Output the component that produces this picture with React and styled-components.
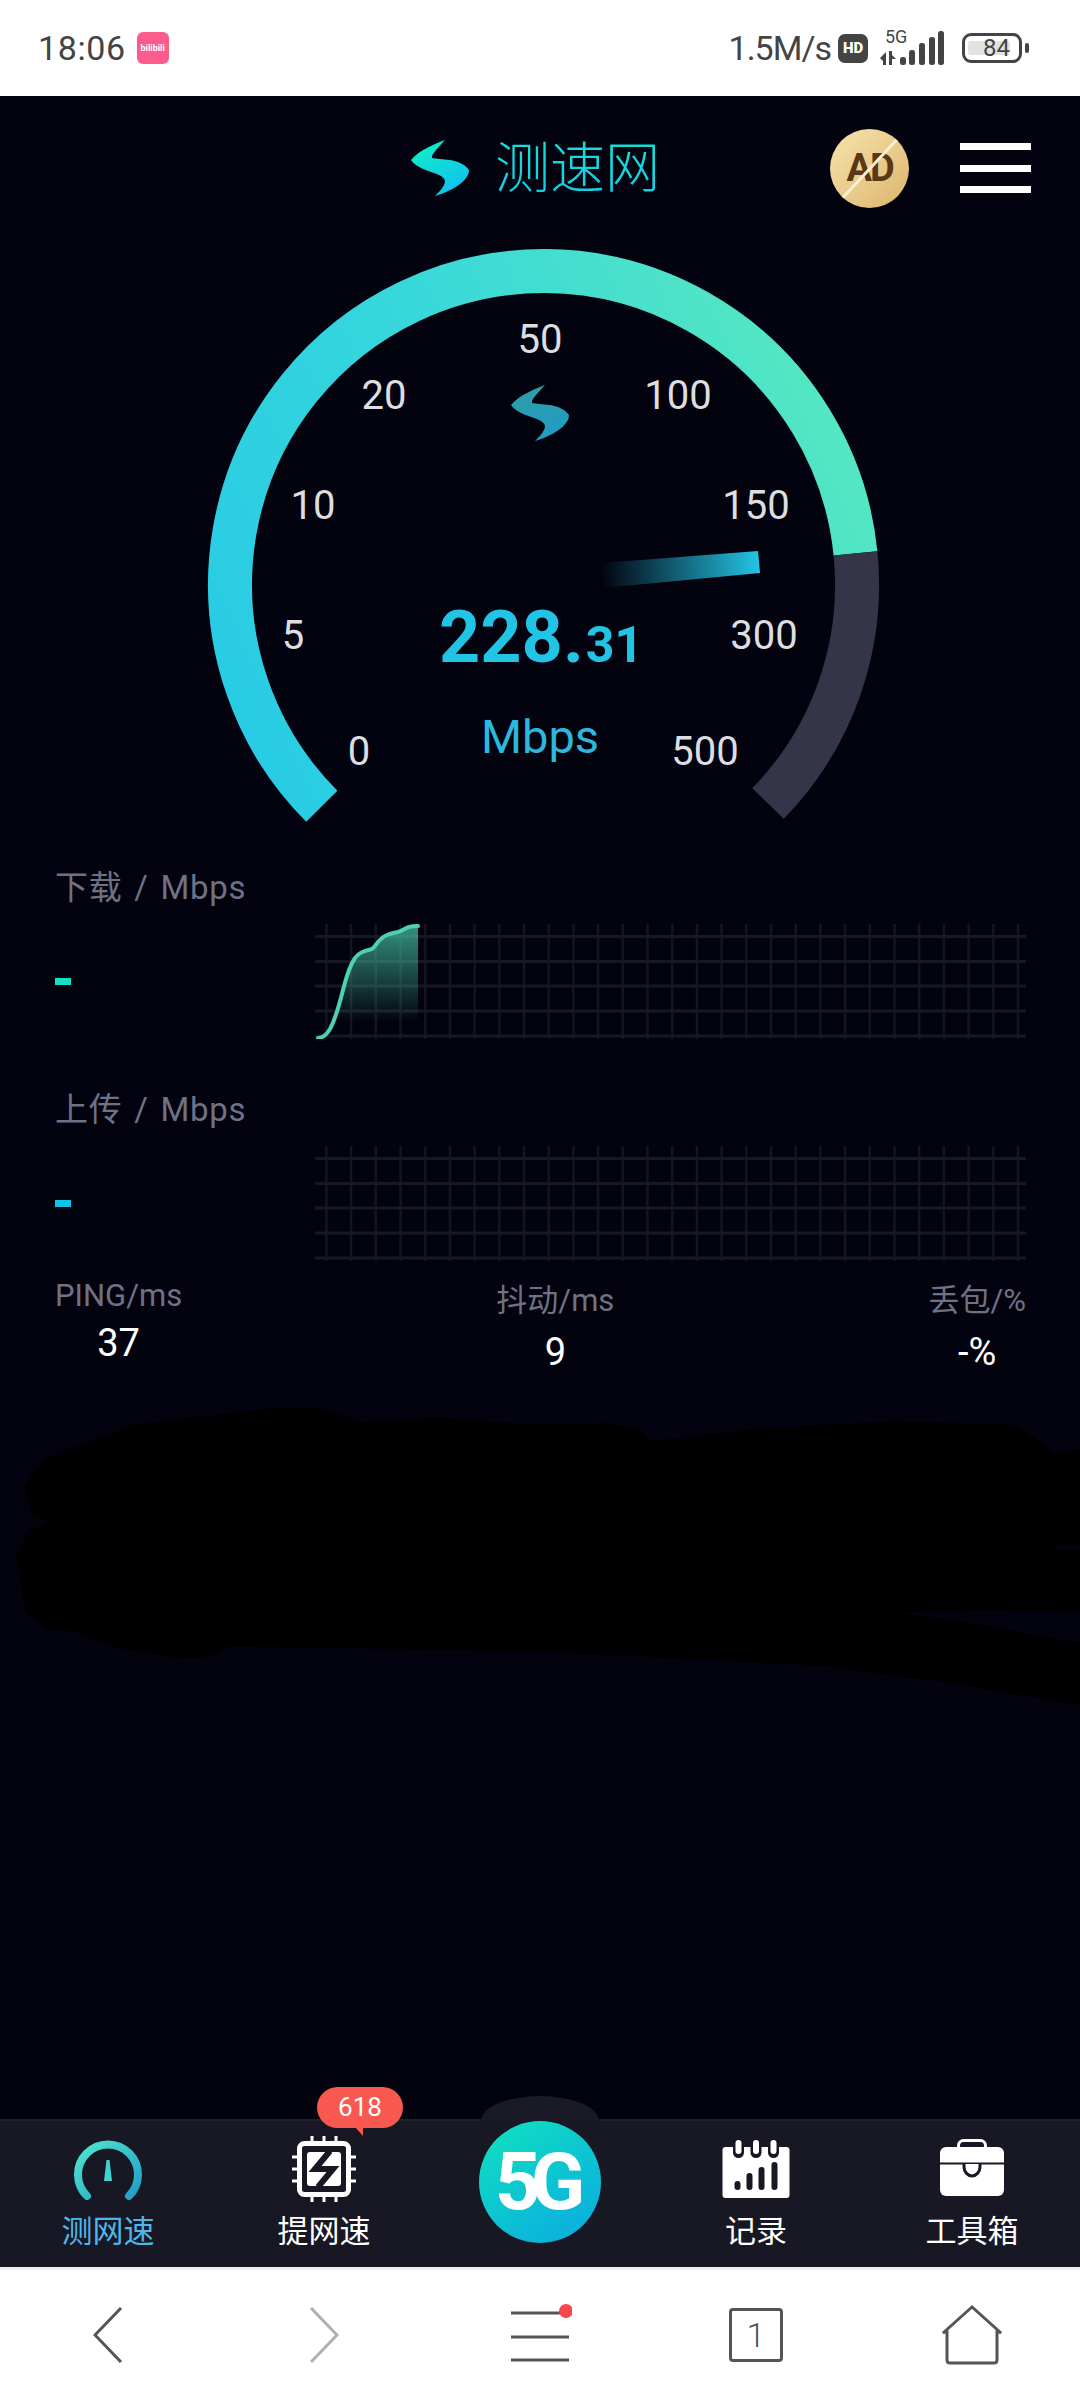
import styled, { createGlobalStyle } from "styled-components"

const GlobalStyle = createGlobalStyle`
html, body {
    margin: 0;
    padding: 0;
    background: #03030f;
}
* {
    box-sizing: border-box;
}
`

const font = `Roboto, "Noto Sans CJK SC", sans-serif`

const Page = styled.div`
width: 1080px;
height: 2400px;
position: relative;
display: flex;
flex-direction: column;
overflow: hidden;
background: #03030f;
font-family: ${font};
`

/* phone status bar */
const StatusBar = styled.div`
height: 96px;
flex: none;
background: #fff;
display: flex;
align-items: center;
padding: 0 58px 0 38px;
color: #444;
`
const Clock = styled.span`
font-size: 34px;
line-height: 40px;
letter-spacing: 0.6px;
`
const AppBadge = styled.div`
width: 32px;
height: 32px;
margin-left: 11px;
border-radius: 6px;
background: #fb5c8c;
color: #fff;
font-size: 9px;
font-weight: 700;
line-height: 32px;
text-align: center;
overflow: hidden;
`
const Speed = styled.span`
margin-left: auto;
font-size: 34px;
line-height: 40px;
letter-spacing: -1px;
`
const HdTag = styled.span`
width: 30px;
height: 29px;
margin-left: 7px;
border-radius: 7px;
background: #444;
color: #fff;
font-size: 15px;
font-weight: 900;
line-height: 29px;
text-align: center;
`
const Network = styled.div`
width: 68px;
height: 34px;
margin-left: 12px;
position: relative;
`
const NetworkTag = styled.span`
position: absolute;
left: 5px;
top: -4px;
font-size: 18px;
line-height: 20px;
`
const Battery = styled.div`
width: 60px;
height: 30px;
margin-left: 14px;
padding: 5px 3px;
border: 3px solid #444;
border-radius: 9px;
position: relative;
&::after {
    content: "";
    position: absolute;
    right: -10px;
    top: 7px;
    width: 4px;
    height: 10px;
    border-radius: 2px;
    background: #444;
}
`
const BatteryFill = styled.div`
width: 42px;
height: 14px;
border-radius: 3px;
background: #e2e2e2;
font-size: 24px;
line-height: 14px;
text-align: right;
white-space: nowrap;
`

/* site header */
const Header = styled.div`
height: 144px;
flex: none;
display: flex;
align-items: center;
padding: 0 49px 0 411px;
`
const LogoMark = styled.svg`
width: 58px;
height: 57px;
flex: none;
`
const LogoText = styled.span`
margin-left: 26px;
font-size: 55px;
line-height: 60px;
font-weight: 200;
background: linear-gradient(180deg, #12e2d6, #16cbe8);
-webkit-background-clip: text;
background-clip: text;
color: transparent;
`
const AdCoin = styled.div`
width: 79px;
height: 79px;
margin-left: auto;
border-radius: 50%;
background: linear-gradient(135deg, #f7e3ae, #dcb66c);
color: #5a3815;
font-size: 38px;
font-weight: 700;
line-height: 79px;
letter-spacing: -2px;
text-align: center;
position: relative;
overflow: hidden;
&::after {
    content: "";
    position: absolute;
    left: 38px;
    top: -5px;
    width: 3px;
    height: 90px;
    background: #fbf0d2;
    transform: rotate(43deg);
}
`
const MenuButton = styled.div`
width: 71px;
height: 50px;
margin-left: 51px;
display: flex;
flex-direction: column;
justify-content: space-between;
`
const MenuBar = styled.span`
height: 7px;
background: #fff;
`

/* speed dial */
const Dial = styled.div`
height: 620px;
flex: none;
position: relative;
`
const DialArt = styled.svg`
width: 1080px;
height: 620px;
display: block;
`
const Tick = styled.span`
position: absolute;
left: ${p => p.$x}px;
top: ${p => p.$y}px;
transform: translate(-50%, -50%);
color: #dedee0;
font-size: 40px;
line-height: 44px;
`
const Reading = styled.div`
position: absolute;
left: 439px;
top: 356px;
display: flex;
align-items: baseline;
color: #22c4e6;
font-weight: 700;
`
const ReadingInt = styled.span`
font-size: 72px;
line-height: 84px;
`
const ReadingDec = styled.span`
font-size: 50px;
line-height: 84px;
margin-left: 2px;
`
const Unit = styled.span`
position: absolute;
left: 540px;
top: 469px;
transform: translateX(-50%);
color: #2bb8de;
font-size: 47px;
line-height: 56px;
`

/* download and upload rows */
const ChartRow = styled.div`
padding: 11px 54px 0 55px;
flex: none;
margin-top: ${p => p.$gap || 0}px;
`
const ChartLabel = styled.div`
color: #6f7284;
font-size: 33px;
line-height: 34px;
letter-spacing: 0.7px;
word-spacing: 3px;
`
const ChartBody = styled.div`
margin-top: 19px;
display: flex;
align-items: center;
`
const Dash = styled.span`
width: 16px;
height: 7px;
flex: none;
background: ${p => p.$color};
`
const Chart = styled.svg`
width: 711px;
height: 115px;
margin-left: 244px;
flex: none;
display: block;
`

const Stats = styled.div`
display: flex;
justify-content: space-between;
padding: 0 54px 0 55px;
margin-top: 17px;
`
const Stat = styled.div`
display: flex;
flex-direction: column;
align-items: center;
margin-top: ${p => p.$shift || 0}px;
`
const StatLabel = styled.span`
color: #6f7284;
font-size: 31px;
line-height: 36px;
`
const StatValue = styled.span`
margin-top: ${p => p.$gap}px;
color: #fff;
font-size: 38px;
line-height: 44px;
`

const Scribble = styled.svg`
position: absolute;
left: 0;
top: 1400px;
width: 1080px;
height: 310px;
`

/* bottom tab bar */
const TabBar = styled.div`
height: 148px;
flex: none;
margin-top: auto;
background: #171823;
border-top: 2px solid #20212e;
display: grid;
grid-template-columns: repeat(5, 216px);
position: relative;
`
const Tab = styled.div`
display: flex;
flex-direction: column;
align-items: center;
padding-top: 15px;
position: relative;
`
const TabIcon = styled.svg`
height: 66px;
width: 70px;
display: block;
`
const TabLabel = styled.span`
margin-top: 12px;
color: ${p => (p.$active ? "#4fb6e8" : "#fff")};
font-size: 31px;
line-height: 36px;
`
const Bump = styled.div`
position: absolute;
left: 481px;
top: -25px;
width: 118px;
height: 25px;
border-radius: 59px 59px 0 0 / 25px 25px 0 0;
background: #191a25;
`
const FiveG = styled.div`
width: 122px;
height: 122px;
margin: -15px auto 0;
border-radius: 50%;
background: linear-gradient(145deg, #10e2bf, #0aa9e2);
color: #fff;
font-size: 80px;
font-weight: 700;
line-height: 122px;
letter-spacing: -10px;
padding-right: 10px;
text-align: center;
position: relative;
`
const Bubble = styled.div`
position: absolute;
left: 317px;
top: -34px;
width: 86px;
height: 41px;
border-radius: 21px;
background: #f8584f;
color: #fff;
font-size: 26px;
line-height: 41px;
text-align: center;
&::after {
    content: "";
    position: absolute;
    left: 38px;
    bottom: -8px;
    border-top: 9px solid #f8584f;
    border-left: 8px solid transparent;
}
`

/* browser toolbar */
const BrowserBar = styled.div`
height: 133px;
flex: none;
background: #fff;
border-top: 3px solid #f0f0f5;
display: grid;
grid-template-columns: repeat(5, 216px);
align-items: center;
justify-items: center;
`
const BrowserIcon = styled.svg`
display: block;
fill: none;
stroke: ${p => p.$color || "#555"};
stroke-width: 3;
`
const TabCount = styled.div`
width: 54px;
height: 54px;
border: 3px solid #555;
border-radius: 4px;
color: #555;
font-size: 34px;
font-weight: 300;
line-height: 48px;
text-align: center;
`

const Signal = () => (
    <svg width="68" height="34" viewBox="0 0 68 34" fill="#444">
        <path d="M0 27l6-6v13H3v-4zM9 20h3v4l4 4h-4v6H9z" />
        <rect x="20" y="26" width="6" height="8" rx="2.5" />
        <rect x="29" y="19" width="6" height="15" rx="2.5" />
        <rect x="39" y="12" width="6" height="22" rx="2.5" />
        <rect x="49" y="6" width="6" height="28" rx="2.5" />
        <rect x="58" y="0" width="6" height="34" rx="2.5" />
    </svg>
)

const LOGO_PATH = "M34 0C26 3 8 10 0 20C4 26 14 30 23 33C31 36 34 38 34 42C33 47 28 52 24 56C38 52 58 42 58 30C54 24 46 21 39 20C32 19 25 19 21 18C20 14 28 7 34 0Z"

const TICKS = [
    ["50", 540, 340], ["20", 384, 396], ["100", 678, 396],
    ["10", 313, 506], ["150", 756, 506], ["5", 293, 636],
    ["300", 764, 636], ["0", 359, 752], ["500", 705, 752],
]

const GRID_H = [12.4, 37.4, 62, 87, 112]
const GRID_V = Array.from({ length: 29 }, (_, i) => 11.4 + i * 24.7)

const SpeedGrid = ({ children }) => (
    <Chart viewBox="0 0 711 115">
        <defs>
            <linearGradient id="area" x1="0" y1="0" x2="0" y2="1">
                <stop offset="0" stopColor="#47c9a6" stopOpacity="0.72" />
                <stop offset="0.85" stopColor="#47c9a6" stopOpacity="0" />
            </linearGradient>
        </defs>
        {GRID_V.map(x => <line key={x} x1={x} x2={x} y1="0" y2="115" stroke="#15151e" strokeWidth="2.5" />)}
        {GRID_H.map(y => <line key={y} x1="0" x2="711" y1={y} y2={y} stroke="#181821" strokeWidth="3" />)}
        {children}
    </Chart>
)

const CURVE = "M3 114C8 114 12 110 15 105C20 96 24 82 28 66C32 50 35 41 40 34C44 28 50 27 57 25C60 23 62 18 66 15C70 11 74 10 83 8C87 7 90 4 94 3C97 2 100 2 103 2"

const SCRIBBLE = [
    [27, 1487], [48, 1460], [138, 1427], [275, 1411], [324, 1412], [358, 1425], [441, 1421], [541, 1428],
    [606, 1426], [637, 1432], [652, 1444], [758, 1432], [895, 1424], [1012, 1428], [1033, 1440], [1052, 1456],
    [1090, 1452], [1090, 1540], [1054, 1543], [1050, 1552], [1090, 1553], [1090, 1610], [985, 1607], [864, 1611],
    [964, 1625], [1090, 1648], [1090, 1704], [964, 1682], [826, 1663], [551, 1649], [227, 1643], [207, 1654],
    [179, 1655], [117, 1645], [72, 1628], [48, 1626], [27, 1610], [24, 1580], [19, 1557], [31, 1533],
    [58, 1522], [34, 1513],
]
const scribblePath = "M" + SCRIBBLE.map(p => p.join(" ")).join("L") + "Z"

const App = () => {
    return (
        <Page>
            <GlobalStyle />
            <StatusBar>
                <Clock>18:06</Clock>
                <AppBadge>bilibili</AppBadge>
                <Speed>1.5M/s</Speed>
                <HdTag>HD</HdTag>
                <Network>
                    <Signal />
                    <NetworkTag>5G</NetworkTag>
                </Network>
                <Battery>
                    <BatteryFill>84</BatteryFill>
                </Battery>
            </StatusBar>

            <Header>
                <LogoMark viewBox="0 0 58 57">
                    <defs>
                        <linearGradient id="logo" x1="0.2" y1="0" x2="0.7" y2="1">
                            <stop offset="0" stopColor="#0ff0c6" />
                            <stop offset="1" stopColor="#10c0f0" />
                        </linearGradient>
                    </defs>
                    <path d={LOGO_PATH} fill="url(#logo)" />
                </LogoMark>
                <LogoText>测速网</LogoText>
                <AdCoin>AD</AdCoin>
                <MenuButton>
                    <MenuBar />
                    <MenuBar />
                    <MenuBar />
                </MenuButton>
            </Header>

            <Dial>
                <DialArt viewBox="0 240 1080 620">
                    <defs>
                        <linearGradient id="ring" gradientUnits="userSpaceOnUse" x1="208" y1="700" x2="860" y2="400">
                            <stop offset="0" stopColor="#27cbe4" />
                            <stop offset="0.45" stopColor="#36d6dc" />
                            <stop offset="1" stopColor="#56e8c0" />
                        </linearGradient>
                        <linearGradient id="needle" gradientUnits="userSpaceOnUse" x1="602" y1="575" x2="759" y2="562">
                            <stop offset="0" stopColor="#23c4e4" stopOpacity="0" />
                            <stop offset="1" stopColor="#23c4e4" />
                        </linearGradient>
                        <linearGradient id="mark" x1="0.2" y1="0" x2="0.7" y2="1">
                            <stop offset="0" stopColor="#2f9da6" />
                            <stop offset="1" stopColor="#1f9cc4" />
                        </linearGradient>
                    </defs>
                    <path d="M321.8 806.2A313.5 313.5 0 1 1 855.5 553.4" fill="none" stroke="url(#ring)" strokeWidth="44" />
                    <path d="M855.5 553.4A313.5 313.5 0 0 1 768 803.5" fill="none" stroke="#343549" strokeWidth="44" />
                    <path d="M602 563L758 551L760 573L602 588Z" fill="url(#needle)" />
                    <path d={LOGO_PATH} fill="url(#mark)" transform="translate(511 385)" />
                </DialArt>
                {TICKS.map(([text, x, y]) => (
                    <Tick key={text} $x={x} $y={y - 240}>{text}</Tick>
                ))}
                <Reading>
                    <ReadingInt>228.</ReadingInt>
                    <ReadingDec>31</ReadingDec>
                </Reading>
                <Unit>Mbps</Unit>
            </Dial>

            <ChartRow>
                <ChartLabel>下载 / Mbps</ChartLabel>
                <ChartBody>
                    <Dash $color="#11e0c8" />
                    <SpeedGrid>
                        <path d={CURVE + "V100H3Z"} fill="url(#area)" />
                        <path d={CURVE} fill="none" stroke="#4fd0ae" strokeWidth="4" strokeLinecap="round" />
                    </SpeedGrid>
                </ChartBody>
            </ChartRow>
            <ChartRow $gap={43}>
                <ChartLabel>上传 / Mbps</ChartLabel>
                <ChartBody>
                    <Dash $color="#0fc4ec" />
                    <SpeedGrid />
                </ChartBody>
            </ChartRow>

            <Stats>
                <Stat>
                    <StatLabel>PING/ms</StatLabel>
                    <StatValue $gap={7}>37</StatValue>
                </Stat>
                <Stat $shift={5}>
                    <StatLabel>抖动/ms</StatLabel>
                    <StatValue $gap={11}>9</StatValue>
                </Stat>
                <Stat $shift={5}>
                    <StatLabel>丢包/%</StatLabel>
                    <StatValue $gap={11}>-%</StatValue>
                </Stat>
            </Stats>

            <Scribble viewBox="0 1400 1080 310">
                <path d={scribblePath} fill="#000" stroke="#000" strokeWidth="6" strokeLinejoin="round" />
            </Scribble>

            <TabBar>
                <Bump />
                <Bubble>618</Bubble>
                <Tab>
                    <TabIcon viewBox="0 0 70 66">
                        <defs>
                            <linearGradient id="tabGauge" x1="0" y1="0" x2="1" y2="1">
                                <stop offset="0" stopColor="#4fe6d0" />
                                <stop offset="1" stopColor="#239cc4" />
                            </linearGradient>
                        </defs>
                        <path d="M14 60A30 30 0 1 1 56 60" fill="none" stroke="url(#tabGauge)" strokeWidth="8" strokeLinecap="round" />
                        <path d="M33.5 24H36.5L39 45H31Z" fill="#3ed4cc" />
                    </TabIcon>
                    <TabLabel $active>测网速</TabLabel>
                </Tab>
                <Tab>
                    <TabIcon viewBox="0 0 70 66">
                        <g fill="#fff">
                            {[23, 35, 47].map(v => <rect key={"t" + v} x={v - 1.5} y="0" width="3" height="8" />)}
                            {[23, 35, 47].map(v => <rect key={"b" + v} x={v - 1.5} y="58" width="3" height="8" />)}
                            {[21, 33, 45].map(v => <rect key={"l" + v} x="3" y={v - 1.5} width="8" height="3" />)}
                            {[21, 33, 45].map(v => <rect key={"r" + v} x="59" y={v - 1.5} width="8" height="3" />)}
                        </g>
                        <rect x="10.5" y="7.5" width="49" height="51" rx="5" fill="#171823" stroke="#fff" strokeWidth="5" />
                        <rect x="18" y="16" width="34" height="34" rx="3" fill="#fff" />
                        <path d="M41 15L26 33H44L29 51" fill="none" stroke="#171823" strokeWidth="6" />
                    </TabIcon>
                    <TabLabel>提网速</TabLabel>
                </Tab>
                <Tab>
                    <FiveG>5G</FiveG>
                </Tab>
                <Tab>
                    <TabIcon viewBox="-1.5 -4 70 66">
                        <rect x="0" y="7" width="67" height="51" rx="3" fill="#fff" />
                        {[16, 33.5, 51].map(v => (
                            <g key={v}>
                                <rect x={v - 5.5} y="-1" width="11" height="19" rx="5.5" fill="#171823" />
                                <rect x={v - 3} y="0" width="6" height="14" rx="3" fill="#fff" />
                            </g>
                        ))}
                        <rect x="12" y="41" width="6" height="9" rx="3" fill="#171823" />
                        <rect x="24" y="33" width="6" height="17" rx="3" fill="#171823" />
                        <rect x="36" y="27" width="6" height="23" rx="3" fill="#171823" />
                        <rect x="49" y="22" width="6" height="28" rx="3" fill="#171823" />
                    </TabIcon>
                    <TabLabel>记录</TabLabel>
                </Tab>
                <Tab>
                    <TabIcon viewBox="-3 -3 70 66">
                        <rect x="18.5" y="1.5" width="27" height="14" rx="5" fill="none" stroke="#fff" strokeWidth="3" />
                        <rect x="0" y="8" width="64" height="49" rx="6" fill="#fff" />
                        <rect x="0" y="23.5" width="64" height="2" fill="#171823" />
                        <path d="M24 25V28C24 33 28 37 32 37C36 37 40 33 40 28V25" fill="#fff" stroke="#171823" strokeWidth="3" />
                    </TabIcon>
                    <TabLabel>工具箱</TabLabel>
                </Tab>
            </TabBar>

            <BrowserBar>
                <BrowserIcon width="30" height="56" viewBox="0 0 30 56">
                    <path d="M28 1L2 28L28 55" />
                </BrowserIcon>
                <BrowserIcon width="30" height="56" viewBox="0 0 30 56" $color="#b0b0b0">
                    <path d="M2 1L28 28L2 55" />
                </BrowserIcon>
                <BrowserIcon width="64" height="62" viewBox="0 0 64 62">
                    <path d="M3 9H55M3 33H61M3 56H61" />
                    <circle cx="58" cy="7" r="7" fill="#f9464b" stroke="none" />
                </BrowserIcon>
                <TabCount>1</TabCount>
                <BrowserIcon width="62" height="60" viewBox="0 0 62 60">
                    <path d="M31 2L2 28L6 26V55C6 57 7 58 9 58H53C55 58 56 57 56 55V26L60 28Z" />
                </BrowserIcon>
            </BrowserBar>
        </Page>
    )
}

export default App
